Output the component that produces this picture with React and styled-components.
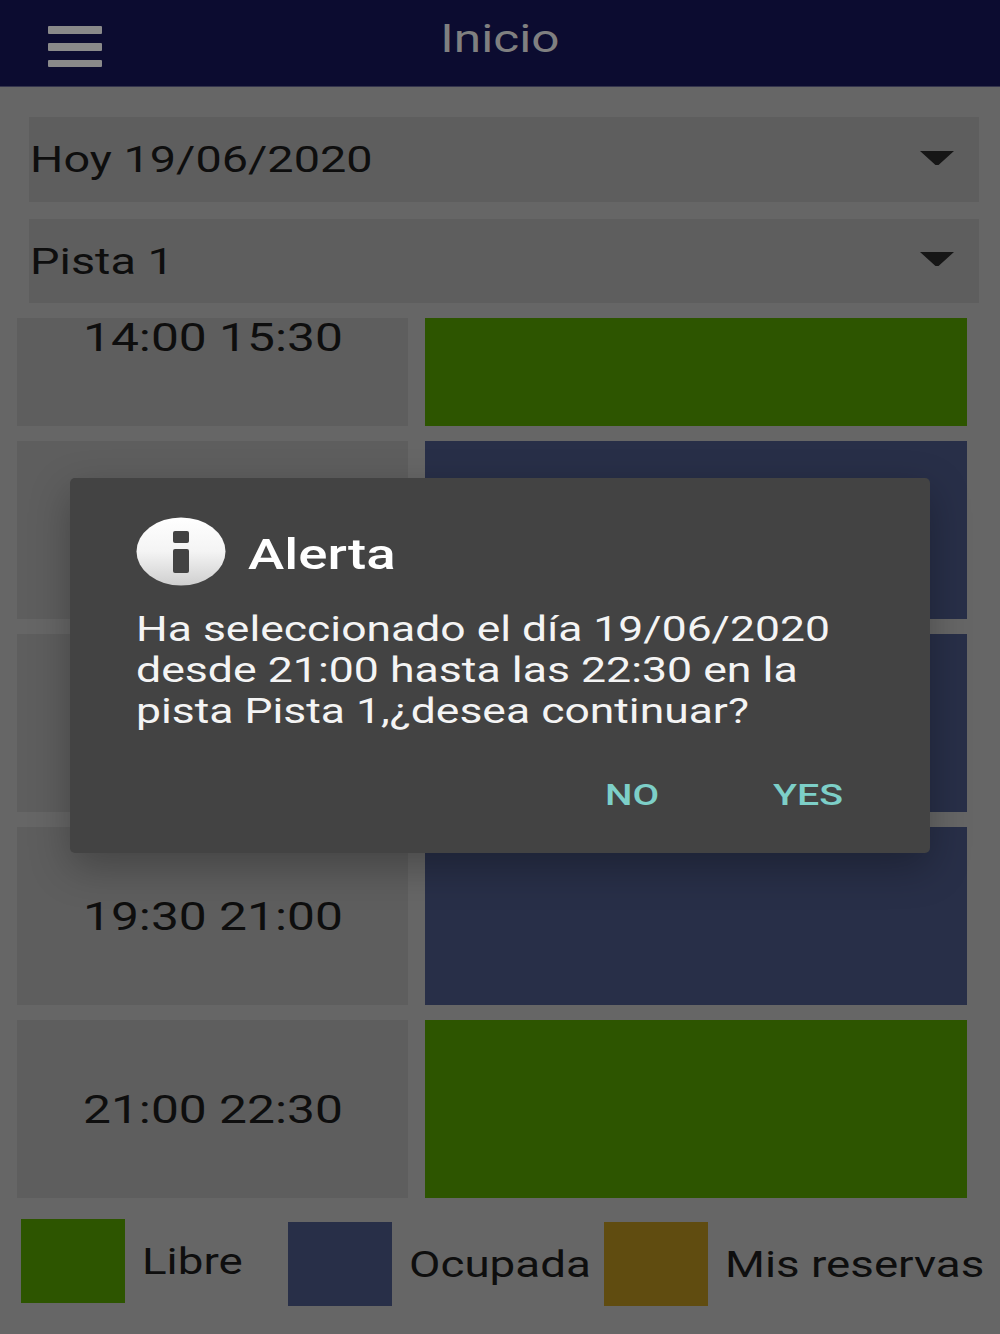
import React from "react";
import styled, { createGlobalStyle } from "styled-components";

const Global = createGlobalStyle`
  html, body { margin: 0; padding: 0; background: #666666; }
  body { font-family: Roboto, "Liberation Sans", sans-serif; color: #101010; }
  * { box-sizing: border-box; }
`;

const Page = styled.div`
  position: relative;
  width: 1000px;
  height: 1334px;
  overflow: hidden;
  display: flex;
  flex-direction: column;
  background: #666666;
`;

const Stretch = styled.span`
  display: inline-block;
  white-space: nowrap;
  transform: scaleX(${(p) => p.$x || 1.27});
  transform-origin: ${(p) => (p.$center ? "center" : "left")} center;
`;

const Header = styled.header`
  height: 87px;
  flex: none;
  display: grid;
  grid-template-columns: 1fr auto 1fr;
  padding: 0 48px;
  background: #0c0c30;
  border-bottom: 1px solid #34344c;
`;

const Burger = styled.svg`
  display: block;
  margin-top: 26px;
  width: 54px;
  height: 42px;
`;

const Title = styled.h1`
  margin: 14px 0 0;
  font-size: 39px;
  line-height: 50px;
  font-weight: 400;
  color: #808080;
`;

const Selects = styled.div`
  display: flex;
  flex-direction: column;
  gap: 17px;
  margin: 30px 21px 0 29px;
`;

const Select = styled.div`
  height: 84.5px;
  display: flex;
  align-items: center;
  justify-content: space-between;
  padding: 1px 24px 0 0;
  background: #5e5e5e;
  font-size: 37px;
  color: #0e0e0e;
`;

const SelectText = styled(Stretch)`
  margin-left: 1px;
`;

const Caret = styled.svg`
  width: 36px;
  height: 16px;
  margin-bottom: 6px;
`;

const Slots = styled.div`
  height: 880px;
  margin: 15px 33px 0 17px;
  overflow: hidden;
  flex: none;
`;

const SlotList = styled.div`
  display: flex;
  flex-direction: column;
  gap: 15px;
  margin-top: -70px;
`;

const Slot = styled.div`
  display: grid;
  grid-template-columns: 391px 542px;
  gap: 17px;
  height: 178px;
`;

const Time = styled.div`
  display: flex;
  align-items: center;
  justify-content: center;
  padding-top: 2px;
  background: #5e5e5e;
  font-size: 39px;
  line-height: 1;
  color: #0e0e0e;
`;

const State = styled.div`
  background: ${(p) => p.$color};
`;

const Legend = styled.div`
  display: flex;
  padding-left: 21px;
`;

const LegendItem = styled.div`
  display: flex;
  width: ${(p) => p.$width}px;
  margin-top: ${(p) => p.$top}px;
`;

const Swatch = styled.div`
  flex: none;
  width: 104px;
  height: 84px;
  background: ${(p) => p.$color};
`;

const LegendLabel = styled.div`
  margin-left: 17px;
  height: 84px;
  padding-top: 2px;
  display: flex;
  align-items: center;
  font-size: 36px;
  color: #0e0e0e;
`;

const Dialog = styled.div`
  position: absolute;
  left: 70px;
  top: 478px;
  width: 860px;
  height: 375px;
  background: #434343;
  border-radius: 5px;
  box-shadow: 0 14px 40px rgba(0, 0, 0, 0.28);
  color: #ffffff;
`;

const DialogHead = styled.div`
  display: flex;
  align-items: center;
  gap: 22px;
  padding: 39px 0 0 66px;
`;

const InfoIcon = styled.svg`
  display: block;
  width: 90px;
  height: 69px;
  flex: none;
`;

const DialogTitle = styled.h2`
  margin: 4px 0 0;
  font-size: 43px;
  line-height: 50px;
  font-weight: 500;
`;

const DialogBody = styled.p`
  margin: 23px 0 0;
  padding-left: 66px;
  font-size: 35px;
  line-height: 41px;
  color: #f4f4f4;
`;

const BodyLine = styled(Stretch)`
  display: block;
`;

const DialogActions = styled.div`
  display: flex;
  margin-top: 43px;
  padding-left: 535px;
`;

const Action = styled.button`
  width: ${(p) => p.$width}px;
  padding: 0;
  border: 0;
  background: none;
  text-align: left;
  font-family: inherit;
  font-size: 30px;
  line-height: 40px;
  font-weight: 500;
  color: #7dcfc8;
`;

const GREEN = "#2d5500";
const NAVY = "#282f48";
const BROWN = "#604c10";

const slots = [
  ["14:00 15:30", GREEN],
  ["", NAVY],
  ["", NAVY],
  ["19:30 21:00", NAVY],
  ["21:00 22:30", GREEN],
];

const DownCaret = () => (
  <Caret viewBox="0 0 36 16">
    <path d="M1 2h34L19.8 15.8a2.6 2.6 0 0 1-3.6 0Z" fill="#161616" />
  </Caret>
);

export default function App() {
  return (
    <Page>
      <Global />
      <Header>
        <Burger viewBox="0 0 54 42">
          <rect x="0" y="0" width="54" height="8" rx="1" fill="#8a8a8a" />
          <rect x="0" y="17" width="54" height="8" rx="1" fill="#8a8a8a" />
          <rect x="0" y="34" width="54" height="7" rx="1" fill="#8a8a8a" />
        </Burger>
        <Title>
          <Stretch $center>Inicio</Stretch>
        </Title>
      </Header>
      <Selects>
        <Select>
          <SelectText $x={1.265}>Hoy 19/06/2020</SelectText>
          <DownCaret />
        </Select>
        <Select>
          <SelectText $x={1.265}>Pista 1</SelectText>
          <DownCaret />
        </Select>
      </Selects>
      <Slots>
        <SlotList>
          {slots.map(([time, color], index) => (
            <Slot key={index}>
              <Time>
                <Stretch $center $x={1.275}>{time}</Stretch>
              </Time>
              <State $color={color} />
            </Slot>
          ))}
        </SlotList>
      </Slots>
      <Legend>
        <LegendItem $width={267} $top={21}>
          <Swatch $color={GREEN} />
          <LegendLabel>
            <Stretch>Libre</Stretch>
          </LegendLabel>
        </LegendItem>
        <LegendItem $width={316} $top={24}>
          <Swatch $color={NAVY} />
          <LegendLabel>
            <Stretch>Ocupada</Stretch>
          </LegendLabel>
        </LegendItem>
        <LegendItem $width={380} $top={24}>
          <Swatch $color={BROWN} />
          <LegendLabel>
            <Stretch>Mis reservas</Stretch>
          </LegendLabel>
        </LegendItem>
      </Legend>
      <Dialog>
        <DialogHead>
          <InfoIcon viewBox="0 0 90 69">
            <defs>
              <linearGradient id="infoFill" x1="0" y1="0" x2="0" y2="1">
                <stop offset="0" stopColor="#ffffff" />
                <stop offset="0.5" stopColor="#f4f4f4" />
                <stop offset="1" stopColor="#cfcfcf" />
              </linearGradient>
            </defs>
            <ellipse cx="45" cy="34.5" rx="44.5" ry="34" fill="url(#infoFill)" />
            <rect x="37" y="14" width="16" height="12" rx="2" fill="#434343" />
            <rect x="37" y="32" width="16" height="24" rx="2" fill="#434343" />
          </InfoIcon>
          <DialogTitle>
            <Stretch>Alerta</Stretch>
          </DialogTitle>
        </DialogHead>
        <DialogBody>
          <BodyLine>Ha seleccionado el día 19/06/2020</BodyLine>
          <BodyLine $x={1.275}>desde 21:00 hasta las 22:30 en la</BodyLine>
          <BodyLine>pista Pista 1,¿desea continuar?</BodyLine>
        </DialogBody>
        <DialogActions>
          <Action $width={168}>
            <Stretch $x={1.29}>NO</Stretch>
          </Action>
          <Action $width={100}>
            <Stretch $x={1.31}>YES</Stretch>
          </Action>
        </DialogActions>
      </Dialog>
    </Page>
  );
}
